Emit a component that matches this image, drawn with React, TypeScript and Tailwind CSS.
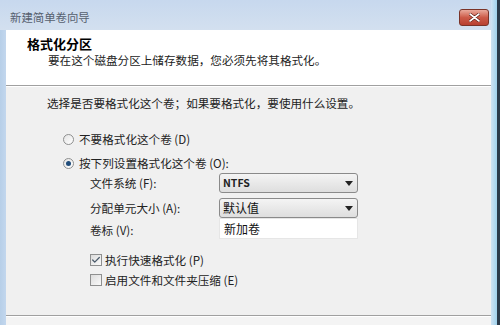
import { Check } from 'lucide-react'

const font = { fontFamily: '"Noto Sans CJK SC", "Noto Sans", sans-serif' }

function Radio({ checked }: { checked?: boolean }) {
  return (
    <span className="w-[11px] h-[11px] rounded-full border border-[#8e8f8f] bg-gradient-to-br from-[#e4e4e4] to-[#ffffff] flex items-center justify-center shrink-0">
      {checked && <span className="w-[5px] h-[5px] rounded-full bg-[#1f4c7a]" />}
    </span>
  )
}

function Box({ checked }: { checked?: boolean }) {
  return (
    <span className="w-[12px] h-[12px] border border-[#8e8f8f] bg-gradient-to-br from-[#dcdcdc] to-[#fafafa] flex items-center justify-center shrink-0">
      {checked && <Check className="w-[10px] h-[10px] text-[#4a5a6a]" strokeWidth={3} />}
    </span>
  )
}

function Select({ value, bold }: { value: string; bold?: boolean }) {
  return (
    <div className="w-[139px] h-[20px] rounded-[3px] border border-[#8a8a8a] bg-gradient-to-b from-[#f4f4f4] to-[#dedede] flex items-center justify-between pl-[3px] pr-[4px]">
      <span className={bold ? 'text-[10.5px] font-bold text-[#222]' : 'text-[12px] text-[#111]'}>{value}</span>
      <svg width="8" height="5" viewBox="0 0 8 5"><path d="M0 0h8L4 5z" fill="#222" /></svg>
    </div>
  )
}

export default function App() {
  return (
    <div className="w-[500px] h-[325px] flex overflow-hidden bg-[#bcd3ec] text-[#1a1a1a]" style={font}>
      <div className="flex-1 flex flex-col">
        {/* Title bar */}
        <div className="h-[30px] flex items-start bg-gradient-to-b from-[#c7d8ee] to-[#d3e0ef] relative">
          <span className="pl-[10px] pt-[10px] text-[11.4px] leading-[14px] text-[#56606e]">新建简单卷向导</span>
          <div className="absolute left-[459px] top-[9px] w-[30px] h-[17px] rounded-[3px] border border-[#7a3328] bg-gradient-to-b from-[#e9a99c] via-[#cc5a48] to-[#b84030] flex items-center justify-center">
            <svg width="11" height="9" viewBox="0 0 11 9">
              <path d="M1 1l9 7M10 1L1 8" stroke="#5a1a12" strokeWidth="3" strokeLinecap="round" />
              <path d="M1 1l9 7M10 1L1 8" stroke="#ffffff" strokeWidth="1.6" strokeLinecap="round" />
            </svg>
          </div>
        </div>

        <div className="flex-1 flex">
          <div className="w-[6px] bg-gradient-to-r from-[#b7cfe8] to-[#c3d7ee]" />

          <div className="flex-1 flex flex-col">
            {/* Header */}
            <div className="h-[55px] bg-white pl-[21px] pt-[6px]">
              <div className="text-[13px] leading-[16px] font-bold text-black">格式化分区</div>
              <div className="pl-[21px] mt-[1px] text-[11.6px] leading-[14px] text-[#222]">
                要在这个磁盘分区上储存数据，您必须先将其格式化。
              </div>
            </div>
            <div className="h-px bg-[#a0a0a0]" />
            <div className="h-px bg-white" />

            {/* Body */}
            <div className="flex-1 bg-[#f0f0f0] text-[11.6px] leading-[14px] text-[#222]">
              <div className="pl-[41px] pt-[9px]">选择是否要格式化这个卷；如果要格式化，要使用什么设置。</div>

              <div className="pl-[57px] mt-[19px] flex flex-col gap-[4px]">
                <div className="h-[20px] flex items-center gap-[5px]">
                  <Radio />
                  <span>不要格式化这个卷 (D)</span>
                </div>
                <div className="h-[20px] flex items-center gap-[5px]">
                  <Radio checked />
                  <span>按下列设置格式化这个卷 (O):</span>
                </div>
              </div>

              <div className="pl-[84px] flex flex-col gap-[5px]">
                <div className="flex items-center">
                  <span className="w-[129px]">文件系统 (F):</span>
                  <Select value="NTFS" bold />
                </div>
                <div className="flex items-center">
                  <span className="w-[129px]">分配单元大小 (A):</span>
                  <Select value="默认值" />
                </div>
                <div className="flex items-end -mt-[5px]">
                  <span className="w-[129px] pb-[2px]">卷标 (V):</span>
                  <div className="w-[139px] h-[21px] bg-white border border-[#e6e6e6] pl-[4px] flex items-center text-[12px] text-[#111]">
                    新加卷
                  </div>
                </div>
              </div>

              <div className="pl-[84px] mt-[15px] flex flex-col gap-[8px]">
                <div className="h-[12px] flex items-center gap-[3px]">
                  <Box checked />
                  <span>执行快速格式化 (P)</span>
                </div>
                <div className="h-[12px] flex items-center gap-[3px]">
                  <Box />
                  <span>启用文件和文件夹压缩 (E)</span>
                </div>
              </div>
            </div>

            <div className="h-px bg-[#a0a0a0]" />
            <div className="h-[9px] bg-[#f4f4f4] border-t border-white" />
          </div>
        </div>
      </div>

      {/* Right frame edge */}
      <div className="w-[9px] flex">
        <div className="w-[6px] bg-gradient-to-r from-[#cfe3f3] to-[#9fd2ec]" />
        <div className="w-[3px] bg-[#2a3a4a]" />
      </div>
    </div>
  )
}
